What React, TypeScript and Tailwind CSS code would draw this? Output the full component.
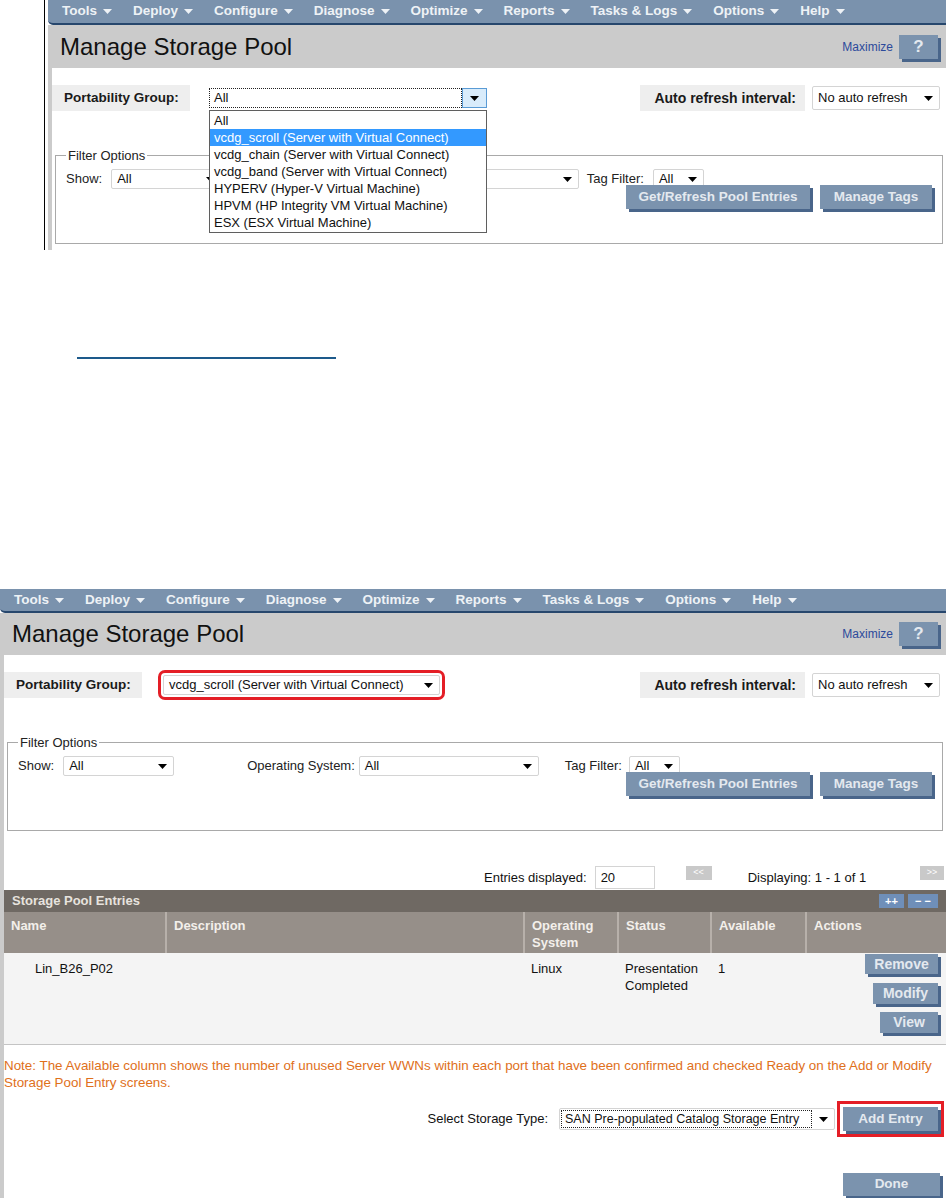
import type { ReactNode } from "react";

const menus = ["Tools", "Deploy", "Configure", "Diagnose", "Optimize", "Reports", "Tasks & Logs", "Options", "Help"];

const groups = [
  "All",
  "vcdg_scroll (Server with Virtual Connect)",
  "vcdg_chain (Server with Virtual Connect)",
  "vcdg_band (Server with Virtual Connect)",
  "HYPERV (Hyper-V Virtual Machine)",
  "HPVM (HP Integrity VM Virtual Machine)",
  "ESX (ESX Virtual Machine)",
];

const cols = [
  { label: "Name", w: "w-[161px]" },
  { label: "Description", w: "w-[358px] border-l-2 border-[#b7b0aa]" },
  { label: "Operating System", w: "w-[94px] border-l-2 border-[#b7b0aa]" },
  { label: "Status", w: "w-[93px] border-l-2 border-[#b7b0aa]" },
  { label: "Available", w: "w-[95px] border-l-2 border-[#b7b0aa]" },
  { label: "Actions", w: "flex-1 border-l-2 border-[#b7b0aa]" },
];

function Caret({ className = "fill-black" }: { className?: string }) {
  return (
    <svg width="9" height="5" viewBox="0 0 9 5" className={`shrink-0 ${className}`}>
      <path d="M0 0h9L4.5 5z" />
    </svg>
  );
}

function Btn({ children, className = "" }: { children: ReactNode; className?: string }) {
  return (
    <div
      className={`flex shrink-0 items-center justify-center bg-[#7b93ae] font-bold text-[#e4e9ef] shadow-[3px_3px_0_#49658a] ${className}`}
    >
      {children}
    </div>
  );
}

function Select({ value, className = "" }: { value: string; className?: string }) {
  return (
    <div
      className={`flex h-[20px] shrink-0 items-center justify-between rounded-[2px] border border-[#d4d4d4] bg-white pl-[5px] pr-[6px] text-[13px] text-[#111] ${className}`}
    >
      <span>{value}</span>
      <Caret />
    </div>
  );
}

function NavBar({ h = "h-[24px]" }: { h?: string }) {
  return (
    <div
      className={`flex shrink-0 items-center gap-[21px] rounded-bl-[5px] border-b-2 border-[#27476d] bg-[#7a92ad] pl-[14px] text-[13.5px] font-bold text-[#eef2f6] ${h}`}
    >
      {menus.map((m) => (
        <div key={m} className="flex items-center gap-[6px] whitespace-nowrap">
          {m}
          <Caret className="fill-[#eef2f6]" />
        </div>
      ))}
    </div>
  );
}

function TitleBar({ h = "h-[42px]" }: { h?: string }) {
  return (
    <div className={`flex shrink-0 items-center justify-between bg-[#cbcbcb] pl-[12px] pr-[8px] ${h}`}>
      <h1 className="text-[24px] leading-none text-[#111]">Manage Storage Pool</h1>
      <div className="flex items-center gap-[6px]">
        <span className="text-[12px] text-[#2b4a9b]">Maximize</span>
        <Btn className="h-[24px] w-[39px] text-[17px]">?</Btn>
      </div>
    </div>
  );
}

function OpenSelect() {
  return (
    <div className="relative ml-[19px] flex h-[20px] w-[278px] shrink-0 text-[13px] text-[#111]">
      <div className="flex flex-1 items-center border border-dotted border-[#222] bg-white pl-[4px]">All</div>
      <div className="flex w-[25px] items-center justify-center border border-[#5a9bd5] bg-[#d9ecfb]">
        <Caret />
      </div>
      <div className="absolute left-0 top-[22px] z-10 w-full border border-[#5f5f5f] bg-white py-px">
        {groups.map((g, i) => (
          <div
            key={g}
            className={`flex h-[17px] items-center pl-[4px] whitespace-nowrap ${i === 1 ? "bg-[#3399ff] text-white" : ""}`}
          >
            {g}
          </div>
        ))}
      </div>
    </div>
  );
}

function PortabilityRow({ open }: { open?: boolean }) {
  return (
    <div className="mt-[17px] flex items-center justify-between pr-[6px]">
      <div className="flex items-center">
        <div className="flex h-[26px] w-[138px] items-center bg-[#eeeeee] pl-[12px] text-[13.5px] font-bold text-[#1a1a1a]">
          Portability Group:
        </div>
        {open ? (
          <OpenSelect />
        ) : (
          <Select
            className="ml-[21px] w-[277px] outline-[3px] outline-offset-2 outline-[#e41e26]"
            value="vcdg_scroll (Server with Virtual Connect)"
          />
        )}
      </div>
      <div className="flex items-center">
        <div className="flex h-[26px] w-[165px] items-center justify-end whitespace-nowrap bg-[#eeeeee] pr-[9px] text-[14px] font-bold text-[#1a1a1a]">
          Auto refresh interval:
        </div>
        <Select className="ml-[7px] h-[24px] w-[128px]" value="No auto refresh" />
      </div>
    </div>
  );
}

function FilterOptions({ compact }: { compact?: boolean }) {
  return (
    <fieldset className="mx-[3px] mt-[37px] border border-[#a9a9a9] pb-[34px] pl-[10px] pr-[10px] pt-[6px]">
      <legend className="px-[2px] text-[13px] leading-[15px] text-[#222]">Filter Options</legend>
      <div className="flex items-center text-[13px] text-[#222]">
        <span>Show:</span>
        <Select className="ml-[9px] w-[111px]" value="All" />
        <span className="ml-[73px]">Operating System:</span>
        <Select className={compact ? "ml-[4px] w-[172px]" : "ml-[4px] w-[180px]"} value="All" />
        <span className={compact ? "ml-[8px]" : "ml-[26px]"}>Tag Filter:</span>
        <Select className={compact ? "ml-[9px] w-[51px]" : "ml-[7px] w-[51px]"} value="All" />
      </div>
      <div className="-mt-[4px] flex justify-end gap-[10px]">
        <Btn className="h-[24px] w-[184px] text-[13.5px]">Get/Refresh Pool Entries</Btn>
        <Btn className="h-[24px] w-[112px] text-[13.5px]">Manage Tags</Btn>
      </div>
    </fieldset>
  );
}

function PoolTable() {
  return (
    <div className="mt-px flex flex-col">
      <div className="flex h-[22px] items-center justify-between bg-[#6f6963] pl-[8px] pr-[8px]">
        <span className="text-[13px] font-bold text-[#e7e3de]">Storage Pool Entries</span>
        <div className="flex gap-[4px]">
          <div className="flex h-[14px] w-[25px] items-center justify-center bg-[#6f8fb9] text-[11px] font-bold leading-none text-white">
            ++
          </div>
          <div className="flex h-[14px] w-[30px] items-center justify-center bg-[#6f8fb9] text-[11px] font-bold leading-none text-white">
            − −
          </div>
        </div>
      </div>
      <div className="flex h-[41px] bg-[#968f89] text-[13px] font-bold leading-[17px] text-[#f3efeb]">
        {cols.map((c) => (
          <div key={c.label} className={`shrink-0 pl-[7px] pr-[10px] pt-[5px] ${c.w}`}>
            {c.label}
          </div>
        ))}
      </div>
      <div className="flex h-[92px] border-b border-[#c4c4c4] bg-[#f4f4f4] text-[13px] leading-[17px] text-[#111]">
        <div className="w-[161px] shrink-0 pl-[31px] pt-[7px]">Lin_B26_P02</div>
        <div className="w-[358px] shrink-0" />
        <div className="w-[94px] shrink-0 pl-[8px] pt-[7px]">Linux</div>
        <div className="w-[93px] shrink-0 pl-[8px] pt-[7px]">
          Presentation
          <br />
          Completed
        </div>
        <div className="w-[95px] shrink-0 pl-[8px] pt-[7px]">1</div>
        <div className="flex flex-1 flex-col items-end pr-[8px] text-[14px]">
          <Btn className="mt-px h-[20px] w-[73px]">Remove</Btn>
          <Btn className="mt-[9px] h-[21px] w-[65px]">Modify</Btn>
          <Btn className="mt-[8px] h-[21px] w-[58px]">View</Btn>
        </div>
      </div>
    </div>
  );
}

export default function App() {
  return (
    <div className="h-[1198px] w-[946px] overflow-hidden bg-white font-['Liberation_Sans',Arial,sans-serif]">
      <div className="flex h-[250px] overflow-hidden">
        <div className="ml-[44px] w-px shrink-0 bg-black" />
        <div className="ml-[3px] flex w-[898px] shrink-0 flex-col">
          <NavBar h="h-[25px]" />
          <TitleBar h="h-[43px]" />
          <div className="flex-1 border-l-4 border-[#cbcbcb]">
            <PortabilityRow open />
            <FilterOptions compact />
          </div>
        </div>
      </div>

      <div className="ml-[77px] mt-[107px] h-[2px] w-[259px] bg-[#1d5a8b]" />

      <div className="mt-[230px] flex h-[609px] flex-col">
        <NavBar />
        <TitleBar />
        <div className="flex flex-1 flex-col border-l-4 border-[#cbcbcb]">
          <PortabilityRow />
          <FilterOptions />

          <div className="mt-[35px] flex items-center pl-[480px] text-[13px] text-[#111]">
            <span>Entries displayed:</span>
            <div className="ml-[8px] flex h-[23px] w-[60px] items-center border border-[#d4d4d4] bg-white pl-[5px]">20</div>
            <div className="ml-[31px] flex h-[14px] w-[26px] items-center justify-center self-start bg-[#c9c9c9] text-[9px] text-white">
              &lt;&lt;
            </div>
            <span className="ml-[36px]">Displaying: 1 - 1 of 1</span>
            <div className="ml-auto mr-[2px] flex h-[14px] w-[24px] items-center justify-center self-start bg-[#c9c9c9] text-[9px] text-white">
              &gt;&gt;
            </div>
          </div>

          <PoolTable />

          <p className="mt-[12px] text-[13.4px] leading-[17px] text-[#e0701b]">
            Note: The Available column shows the number of unused Server WWNs within each port that have been confirmed and
            checked Ready on the Add or Modify Storage Pool Entry screens.
          </p>

          <div className="mt-[16px] flex items-center justify-end pr-[8px] text-[13px] text-[#111]">
            <span>Select Storage Type:</span>
            <div className="ml-[11px] flex h-[22px] w-[276px] items-center rounded-[2px] border border-[#d4d4d4] bg-white pl-px pr-[6px]">
              <div className="flex h-[18px] flex-1 items-center border border-dotted border-[#222] pl-[3px] text-[12.5px]">
                SAN Pre-populated Catalog Storage Entry
              </div>
              <div className="ml-[7px]">
                <Caret />
              </div>
            </div>
            <Btn className="ml-[8px] h-[24px] w-[95px] text-[13.5px] outline-[3px] outline-offset-[3px] outline-[#e41e26]">
              Add Entry
            </Btn>
          </div>

          <div className="mt-[42px] flex justify-end pr-[6px]">
            <Btn className="h-[23px] w-[97px] text-[13.5px]">Done</Btn>
          </div>
        </div>
      </div>
    </div>
  );
}
